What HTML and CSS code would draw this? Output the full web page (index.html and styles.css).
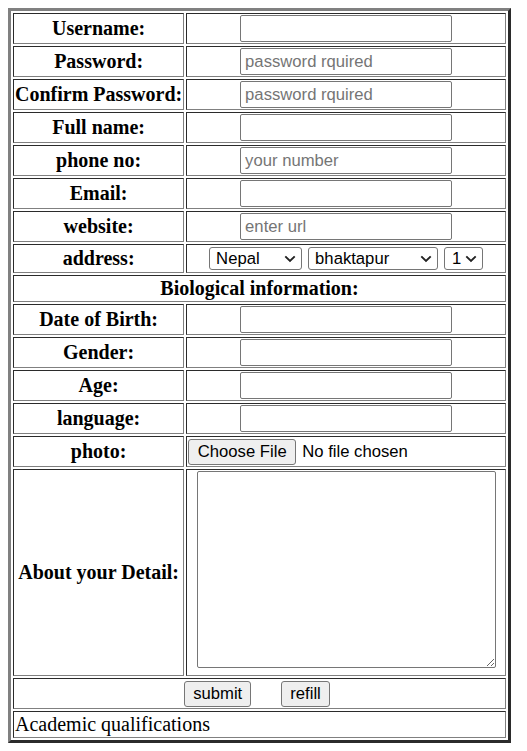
FILE: index.html
```html
<!DOCTYPE html>
<html>
<head>
<meta charset="utf-8">
<title>Form</title>
<link rel="stylesheet" href="styles.css">
</head>
<body>
<form>
<table class="form">
  <tr class="row"><th class="label">Username:</th><td class="ctl"><input class="field" type="text"></td></tr>
  <tr class="row"><th class="label">Password:</th><td class="ctl"><input class="field" type="password" placeholder="password rquired"></td></tr>
  <tr class="row"><th class="label">Confirm Password:</th><td class="ctl"><input class="field" type="password" placeholder="password rquired"></td></tr>
  <tr class="row"><th class="label">Full name:</th><td class="ctl"><input class="field" type="text"></td></tr>
  <tr class="row"><th class="label">phone no:</th><td class="ctl"><input class="field" type="tel" placeholder="your number"></td></tr>
  <tr class="row"><th class="label">Email:</th><td class="ctl"><input class="field" type="email"></td></tr>
  <tr class="row"><th class="label">website:</th><td class="ctl"><input class="field" type="url" placeholder="enter url"></td></tr>
  <tr class="row-addr"><th class="label">address:</th>
    <td class="ctl">
      <div class="selects">
        <select class="sel sel-country"><option>Nepal</option><option>India</option></select>
        <select class="sel sel-city"><option>bhaktapur</option><option>kathmandu</option><option>lalitpur</option></select>
        <select class="sel sel-ward"><option>1</option><option>2</option><option>3</option></select>
      </div>
    </td></tr>
  <tr class="row-head"><th colspan="2" class="section">Biological information:</th></tr>
  <tr class="row"><th class="label">Date of Birth:</th><td class="ctl"><input class="field" type="text"></td></tr>
  <tr class="row"><th class="label">Gender:</th><td class="ctl"><input class="field" type="text"></td></tr>
  <tr class="row"><th class="label">Age:</th><td class="ctl"><input class="field" type="text"></td></tr>
  <tr class="row"><th class="label">language:</th><td class="ctl"><input class="field" type="text"></td></tr>
  <tr class="row"><th class="label">photo:</th><td class="file-cell"><input class="file" type="file"></td></tr>
  <tr class="row-about"><th class="label">About your Detail:</th><td class="ctl"><textarea class="about"></textarea></td></tr>
  <tr class="row"><td colspan="2" class="actions-cell"><div class="actions"><button type="submit" class="btn">submit</button><button type="reset" class="btn">refill</button></div></td></tr>
  <tr class="row-head"><td colspan="2" class="note">Academic qualifications</td></tr>
</table>
</form>
</body>
</html>
```

FILE: styles.css
```css
body {
  margin: 8px;
  font-family: "Liberation Serif", "Times New Roman", serif;
  font-size: 20px;
  color: #000;
  background: #fff;
}

form {
  margin: 0;
}

.form {
  width: 503px;
  border-collapse: separate;
  border-spacing: 2px;
  border: 3px solid;
  border-color: #808080 #2b2b2b #2b2b2b #808080;
}

.form th,
.form td {
  border: 1px solid;
  border-color: #2b2b2b #808080 #808080 #2b2b2b;
  padding: 1px;
  line-height: 23px;
}

.label {
  width: 167px;
  white-space: nowrap;
  font-weight: bold;
  text-align: center;
  vertical-align: middle;
}

.row th,
.row td {
  height: 27px;
}

.row-addr th,
.row-addr td {
  height: 25px;
}

.row-head th,
.row-head td {
  height: 23px;
}

.row-about th,
.row-about td {
  height: 203px;
}

.ctl {
  text-align: center;
  vertical-align: top;
}

.field {
  display: block;
  margin: 0 auto;
  box-sizing: border-box;
  width: 212px;
  height: 27px;
  padding: 1px 4px;
  font: 16.67px "Liberation Sans", Arial, sans-serif;
  color: #000;
  border: 1px solid #767676;
  border-radius: 2px;
  background: #fff;
}

.field::placeholder {
  color: #757575;
}

.selects {
  display: flex;
  justify-content: center;
  align-items: center;
  gap: 6px;
  height: 25px;
}

.sel {
  box-sizing: border-box;
  height: 23px;
  padding: 0 20px 0 6px;
  font: 16.67px "Liberation Sans", Arial, sans-serif;
  color: #000;
  border: 1px solid #767676;
  border-radius: 3px;
  -webkit-appearance: none;
  appearance: none;
  background-color: #fff;
  background-image: url("data:image/svg+xml,%3Csvg xmlns='http://www.w3.org/2000/svg' width='12' height='8' viewBox='0 0 12 8'%3E%3Cpath d='M1.3 1.3 L6 6 L10.7 1.3' fill='none' stroke='%23222' stroke-width='1.9'/%3E%3C/svg%3E");
  background-repeat: no-repeat;
  background-position: right 5px center;
  background-size: 12px 8px;
}

.sel-country { width: 93px; }
.sel-city { width: 130px; }
.sel-ward { width: 39px; padding-left: 7px; }

.section {
  font-weight: bold;
  text-align: center;
}

.file-cell {
  text-align: left;
  vertical-align: middle;
  padding: 1px 0;
}

.file {
  font: 16.67px "Liberation Sans", Arial, sans-serif;
  color: #000;
  height: 26px;
  vertical-align: middle;
}

.file::file-selector-button {
  box-sizing: border-box;
  height: 26px;
  width: 108px;
  margin-right: 6px;
  font: 16.67px "Liberation Sans", Arial, sans-serif;
  color: #000;
  background: #efefef;
  border: 1px solid #767676;
  border-radius: 3px;
}

.about {
  display: block;
  box-sizing: border-box;
  width: 299px;
  height: 197px;
  margin: 0 auto;
  border: 1px solid #767676;
  border-radius: 2px;
  font: 13px "Liberation Mono", monospace;
}

.actions-cell {
  vertical-align: middle;
}

.actions {
  display: flex;
  justify-content: center;
  align-items: center;
  gap: 30px;
  padding-right: 5px;
}

.btn {
  box-sizing: border-box;
  height: 26px;
  padding: 0 8px;
  font: 16.67px "Liberation Sans", Arial, sans-serif;
  color: #000;
  background: #efefef;
  border: 1px solid #767676;
  border-radius: 3px;
}

.note {
  text-align: left;
  font-weight: normal;
  vertical-align: middle;
}
```
